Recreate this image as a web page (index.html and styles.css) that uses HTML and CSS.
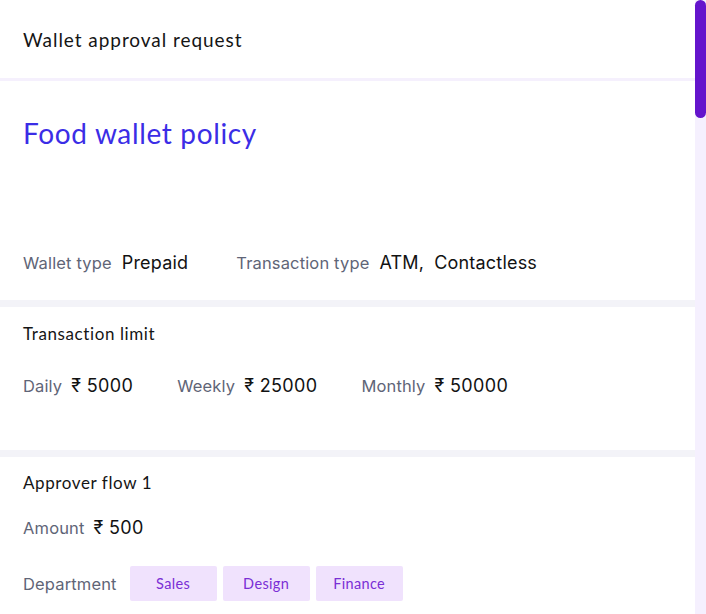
FILE: index.html
```html
<!DOCTYPE html>
<html>
<head>
<meta charset="utf-8">
<link rel="stylesheet" href="styles.css">
</head>
<body>
<div class="page">
  <main class="main">
    <header class="header">Wallet approval request</header>
    <section class="card policy">
      <h1 class="title">Food wallet policy</h1>
      <div class="row wallet-row">
        <div class="pair"><span class="label">Wallet type</span><span class="value">Prepaid</span></div>
        <div class="pair"><span class="label">Transaction type</span><span class="value">ATM,</span><span class="value">Contactless</span></div>
      </div>
    </section>
    <section class="card limit">
      <h2 class="subtitle">Transaction limit</h2>
      <div class="row limit-row">
        <div class="pair tight"><span class="label">Daily</span><span class="value">₹ 5000</span></div>
        <div class="pair tight"><span class="label">Weekly</span><span class="value">₹ 25000</span></div>
        <div class="pair tight"><span class="label">Monthly</span><span class="value">₹ 50000</span></div>
      </div>
    </section>
    <section class="card flow">
      <h2 class="subtitle">Approver flow 1</h2>
      <div class="row amount-row">
        <div class="pair tight"><span class="label">Amount</span><span class="value">₹ 500</span></div>
      </div>
      <div class="row dept-row">
        <span class="label">Department</span>
        <div class="chips">
          <span class="chip">Sales</span>
          <span class="chip">Design</span>
          <span class="chip">Finance</span>
        </div>
      </div>
    </section>
  </main>
  <div class="scrollbar"><div class="thumb"></div></div>
</div>
</body>
</html>
```

FILE: styles.css
```css
* { box-sizing: border-box; margin: 0; padding: 0; }
html, body { height: 100%; }
body {
  background: #ffffff;
  font-family: "Inter", "Liberation Sans", sans-serif;
  color: #111111;
  overflow: hidden;
}
.page {
  display: flex;
  height: 614px;
}
.main {
  width: 695px;
  display: flex;
  flex-direction: column;
  background: #f3f3f8;
  gap: 7px;
}
.header {
  background: #fff;
  font-family: "Lato", "Liberation Sans", sans-serif;
  font-size: 19px;
  letter-spacing: 0.95px;
  line-height: 24px;
  padding: 28px 23px 26px;
  color: #151515;
  border-bottom: 3px solid #f5f0fd;
  height: 81px;
  margin-bottom: -7px;
}
.card {
  background: #fff;
  padding: 0 23px;
}
.policy {
  padding-top: 36px;
  padding-bottom: 25px;
}
.title {
  font-family: "Lato", "Liberation Sans", sans-serif;
  font-weight: 400;
  font-size: 28px;
  letter-spacing: 0.65px;
  line-height: 32px;
  color: #3b2de6;
}
.row {
  display: flex;
  align-items: center;
}
.wallet-row {
  margin-top: 102px;
  gap: 48px;
  height: 24px;
}
.wallet-row .value { letter-spacing: 0.2px; }
.pair {
  display: flex;
  align-items: center;
  gap: 10px;
}
.pair.tight { gap: 9px; }
.label {
  font-size: 16.5px;
  letter-spacing: 0.15px;
  color: #5f6577;
  line-height: 24px;
}
.value {
  font-size: 18px;
  letter-spacing: 0.35px;
  color: #121212;
  line-height: 24px;
}
.limit {
  padding-top: 16px;
  height: 143px;
}
.subtitle {
  font-family: "Lato", "Liberation Sans", sans-serif;
  font-weight: 400;
  font-size: 17px;
  letter-spacing: 0.6px;
  line-height: 22px;
  color: #151515;
}
.limit-row {
  margin-top: 29px;
  gap: 44px;
}
.flow {
  padding-top: 15px;
  flex: 1;
}
.amount-row { margin-top: 22px; }
.dept-row {
  margin-top: 26px;
  gap: 13px;
}
.chips {
  display: flex;
  gap: 6px;
}
.chip {
  width: 87px;
  height: 35px;
  display: flex;
  align-items: center;
  justify-content: center;
  background: #f0e2fd;
  border-radius: 2px;
  font-family: "Lato", "Liberation Sans", sans-serif;
  font-size: 14.5px;
  letter-spacing: 0.35px;
  color: #7a2fd5;
}
.scrollbar {
  width: 11px;
  background: #f5f0fe;
  height: 614px;
}
.thumb {
  height: 118px;
  background: #6414cc;
  border-radius: 6px;
}
```
